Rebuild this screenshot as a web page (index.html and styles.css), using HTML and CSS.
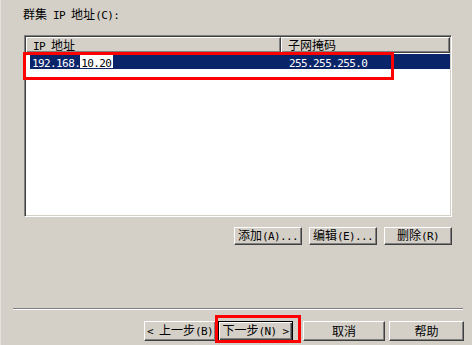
FILE: index.html
```html
<!DOCTYPE html>
<html lang="zh-CN">
<head>
    <meta charset="UTF-8">
    <title>群集 IP 地址</title>
    <link rel="stylesheet" href="styles.css">
</head>
<body>
    <!-- Address list -->
    <div class="label">群集<span class="en"> IP </span>地址<span class="en">(C):</span></div>

    <div class="list">
        <div class="head">
            <div class="hcell col1"><span class="en">IP </span>地址</div>
            <div class="hcell col2">子网掩码</div>
        </div>
        <div class="row selected">
            <div class="cell col1"><span class="en">192.168.</span><span class="edit"><span class="en">10.20</span></span></div>
            <div class="cell col2"><span class="en">255.255.255.0</span></div>
        </div>
    </div>

    <div class="actions">
        <button class="btn">添加<span class="en">(A)...</span></button>
        <button class="btn">编辑<span class="en">(E)...</span></button>
        <button class="btn">删除<span class="en">(R)</span></button>
    </div>

    <!-- Wizard footer -->
    <div class="separator"></div>

    <div class="footer">
        <div class="nav">
            <button class="btn wide back"><span class="en">&lt; </span>上一步<span class="en">(B)</span></button>
            <button class="btn wide default">下一步<span class="en">(N) &gt;</span></button>
        </div>
        <button class="btn wide cancel">取消</button>
        <button class="btn wide">帮助</button>
    </div>

    <!-- Annotations -->
    <div class="mark mark-row"></div>
    <div class="mark mark-next"></div>
</body>
</html>
```

FILE: styles.css
```css
/* General Reset */
body, html {
    margin: 0;
    padding: 0;
}
body {
    position: relative;
    width: 472px;
    height: 345px;
    overflow: hidden;
    box-sizing: border-box;
    border-left: 1px solid #e4e1dc;
    background-color: #d4d0c8;
    color: #000;
    font-family: "Noto Sans CJK SC", sans-serif;
    font-size: 12px;
}
.en {
    font-family: "DejaVu Sans Mono", "Liberation Mono", monospace;
    font-size: 11px;
    letter-spacing: -0.6px;
}
.label {
    padding: 7px 0 0 22px;
    height: 14px;
    line-height: 14px;
}
/* List view */
.list {
    margin: 14px 0 0 23px;
    width: 428px;
    height: 182px;
    box-sizing: border-box;
    background: #fff;
    border: 1px solid;
    border-color: #808080 #fff #fff #808080;
    box-shadow: inset 1px 1px #404040, inset -1px -1px #d4d0c8;
    padding: 1px;
}
.head {
    display: flex;
    height: 16px;
}
.hcell {
    box-sizing: border-box;
    height: 16px;
    line-height: 14px;
    padding-left: 6px;
    background: #d4d0c8;
    border: 1px solid;
    border-color: #fff #404040 #404040 #fff;
    box-shadow: inset -1px -1px #808080;
}
.head .col1 {
    width: 255px;
}
.head .col2 {
    flex: 1;
}
.row {
    display: flex;
    height: 15px;
    line-height: 15px;
    margin: 1px 0 0 4px;
}
.row.selected {
    background: #0a246a;
    color: #fff;
}
.row .col1 {
    width: 251px;
    padding-left: 2px;
}
.row .col2 {
    padding-left: 6px;
}
.edit {
    display: inline-block;
    height: 13px;
    line-height: 13px;
    padding: 0 2px 0 1px;
    background: #fff;
    color: #000;
}
/* Buttons */
.btn {
    box-sizing: border-box;
    width: 68px;
    height: 18px;
    padding: 0;
    background: #d4d0c8;
    color: #000;
    font-family: inherit;
    font-size: 12px;
    line-height: 14px;
    border: 1px solid;
    border-color: #fff #404040 #404040 #fff;
    box-shadow: inset -1px -1px #808080;
}
.actions {
    display: flex;
    justify-content: flex-end;
    gap: 7px;
    margin-top: 10px;
    padding-right: 20px;
}
.separator {
    margin: 63px 9px 0 12px;
    border-top: 1px solid #808080;
    border-bottom: 1px solid #fff;
}
.footer {
    display: flex;
    justify-content: flex-end;
    align-items: center;
    gap: 4px;
    margin-top: 11px;
    padding-right: 8px;
}
.nav {
    display: flex;
    gap: 2px;
    margin-right: 6px;
}
.btn.wide {
    width: 75px;
    height: 20px;
}
.btn.back {
    width: 72px;
}
.btn.cancel {
    width: 82px;
}
.btn.default {
    border-color: #000;
    box-shadow: inset 1px 1px #fff, inset -1px -1px #404040, inset -2px -2px #808080;
}
/* Red annotation boxes */
.mark {
    position: absolute;
    box-sizing: border-box;
    border: 3px solid #f00;
}
.mark-row {
    left: 22px;
    top: 52px;
    width: 371px;
    height: 28px;
}
.mark-next {
    left: 214px;
    top: 315px;
    width: 86px;
    height: 28px;
}
```
